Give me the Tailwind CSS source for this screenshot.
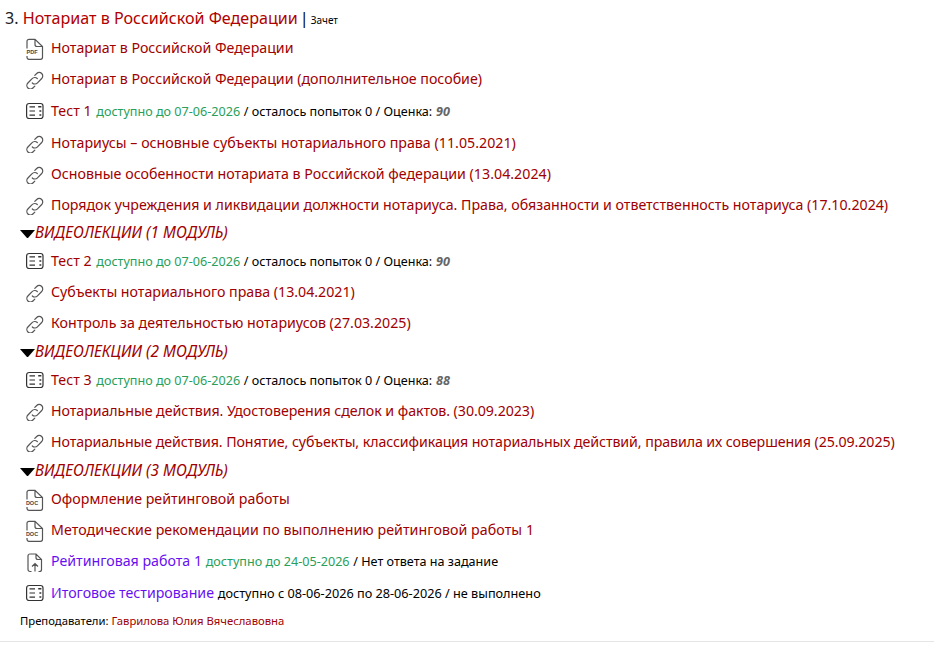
<!DOCTYPE html>
<html lang="ru">
<head>
  <meta charset="UTF-8" />
  <title>Нотариат в Российской Федерации</title>
  <script src="https://cdn.jsdelivr.net/npm/@tailwindcss/browser@4"></script>
</head>
<body class="bg-white font-['Noto_Sans',sans-serif] text-black overflow-hidden">
  <svg width="0" height="0" class="absolute">
    <defs>
      <symbol id="file" viewBox="0 0 20 24"><path d="M3 12.500V5.300a2 2 0 0 1 2-2h6L18.500 10.500V21.300a2 2 0 0 1-2 2H5a2 2 0 0 1-2-2V20M11 3.300V8.500a2 2 0 0 0 2 2h5.500" fill="none" stroke="#555" stroke-width="1.200"/></symbol>
      <symbol id="link" viewBox="0 0 20 20"><g transform="translate(0.800 1.500)" fill="none" stroke="#555" stroke-width="1.200" stroke-linecap="round"><path d="M7.500 12.500a3.600 3.600 0 0 0 5.200-.2l4.200-4.300a3.500 3.500 0 0 0-5-5L10 4.900"/><path d="M12.500 8a3.600 3.600 0 0 0-5.200.2l-4.200 4.300a3.500 3.500 0 0 0 5 5l1.900-1.900"/></g></symbol>
      <symbol id="quiz" viewBox="0 0 20 20"><g fill="none" stroke="#333" stroke-width="1.200"><rect x="2.600" y="2.500" width="16.400" height="15" rx="2.500"/><path d="M5.500 5.900h5.500M5.500 10h5.500M5.500 14.100h5.500" /></g><path d="M14.200 5.100h3.200v1.500h-3.200zM15.400 9.200h1.900v1.500h-1.900zM15.400 13.300h1.900v1.500h-1.900z" fill="#333"/></symbol>
      <symbol id="upload" viewBox="0 0 20 24"><g fill="none" stroke="#555" stroke-width="1.200"><path d="M7.500 22.500H6a2 2 0 0 1-2-2V7a2 2 0 0 1 2-2h6l5.500 5.500V20.500a2 2 0 0 1-2 2H14.500M12 5V8.500a2 2 0 0 0 2 2h3.500M11 22.500V14.500M8 17.500l3-3 3 3"/></g></symbol>
    </defs>
  </svg>

  <div class="pl-[5px] h-[642px] border-b border-[#e5e5e5]">
    <div class="h-[32px] pt-[5px] flex items-center text-[16.100px] leading-none whitespace-nowrap">
      <span class="text-[#222]">3.&nbsp;</span><span class="text-[#b00000]">Нотариат в Российской Федерации</span>
      <span class="ml-[2px] text-black">|</span><span class="ml-[2px] text-[10px] mt-[3px]">Зачет</span>
    </div>

    <div class="ml-[19px] text-[14.200px] whitespace-nowrap">
      <div class="h-[31px] flex items-center">
        <svg class="w-[20px] h-[24px] -my-[2px] mr-[7px] shrink-0"><use href="#file"/><text x="8" y="18.200" font-size="5.500" font-weight="700" fill="#444" text-anchor="middle" font-family="Liberation Sans">PDF</text></svg>
        <a class="text-[#a00000]">Нотариат в Российской Федерации</a>
      </div>
      <div class="h-[31px] flex items-center">
        <svg class="w-[20px] h-[20px] mr-[7px] shrink-0"><use href="#link"/></svg>
        <a class="text-[#a00000]">Нотариат в Российской Федерации (дополнительное пособие)</a>
      </div>
      <div class="h-[33px] pt-[1px] flex items-center">
        <svg class="w-[20px] h-[20px] mr-[7px] shrink-0"><use href="#quiz"/></svg>
        <div>
          <a class="text-[#a00000]">Тест 1</a>
          <span class="ml-[1px] text-[12.600px] text-[#28a05a]">доступно до 07-06-2026</span>
          <span class="text-[12.600px]">/ осталось попыток 0 / Оценка:</span>
          <b class="text-[12.600px] italic text-[#666]">90</b>
        </div>
      </div>
      <div class="h-[31px] flex items-center">
        <svg class="w-[20px] h-[20px] mr-[7px] shrink-0"><use href="#link"/></svg>
        <a class="text-[#a00000] tracking-[0.030px]">Нотариусы – основные субъекты нотариального права (11.05.2021)</a>
      </div>
      <div class="h-[31px] flex items-center">
        <svg class="w-[20px] h-[20px] mr-[7px] shrink-0"><use href="#link"/></svg>
        <a class="text-[#a00000] tracking-[0.030px]">Основные особенности нотариата в Российской федерации (13.04.2024)</a>
      </div>
      <div class="h-[31px] flex items-center">
        <svg class="w-[20px] h-[20px] mr-[7px] shrink-0"><use href="#link"/></svg>
        <a class="text-[#a00000]">Порядок учреждения и ликвидации должности нотариуса. Права, обязанности и ответственность нотариуса (17.10.2024)</a>
      </div>

      <div class="-ml-[4px] h-[25px] flex items-center italic text-[15.400px] text-[#a00000]">
        <span class="w-[15px] h-0 mt-[2px] border-x-[7.500px] border-x-transparent border-t-[8px] border-t-black"></span>ВИДЕОЛЕКЦИИ (1 МОДУЛЬ)
      </div>
      <div class="h-[31px] flex items-center">
        <svg class="w-[20px] h-[20px] mr-[7px] shrink-0"><use href="#quiz"/></svg>
        <div>
          <a class="text-[#a00000]">Тест 2</a>
          <span class="ml-[1px] text-[12.600px] text-[#28a05a]">доступно до 07-06-2026</span>
          <span class="text-[12.600px]">/ осталось попыток 0 / Оценка:</span>
          <b class="text-[12.600px] italic text-[#666]">90</b>
        </div>
      </div>
      <div class="h-[31px] flex items-center">
        <svg class="w-[20px] h-[20px] mr-[7px] shrink-0"><use href="#link"/></svg>
        <a class="text-[#a00000]">Субъекты нотариального права (13.04.2021)</a>
      </div>
      <div class="h-[31px] flex items-center">
        <svg class="w-[20px] h-[20px] mr-[7px] shrink-0"><use href="#link"/></svg>
        <a class="text-[#a00000]">Контроль за деятельностью нотариусов (27.03.2025)</a>
      </div>

      <div class="-ml-[4px] h-[26px] pt-[2px] flex items-center italic text-[15.400px] text-[#a00000]">
        <span class="w-[15px] h-0 mt-[2px] border-x-[7.500px] border-x-transparent border-t-[8px] border-t-black"></span>ВИДЕОЛЕКЦИИ (2 МОДУЛЬ)
      </div>
      <div class="h-[31px] flex items-center">
        <svg class="w-[20px] h-[20px] mr-[7px] shrink-0"><use href="#quiz"/></svg>
        <div>
          <a class="text-[#a00000]">Тест 3</a>
          <span class="ml-[1px] text-[12.600px] text-[#28a05a]">доступно до 07-06-2026</span>
          <span class="text-[12.600px]">/ осталось попыток 0 / Оценка:</span>
          <b class="text-[12.600px] italic text-[#666]">88</b>
        </div>
      </div>
      <div class="h-[31px] flex items-center">
        <svg class="w-[20px] h-[20px] mr-[7px] shrink-0"><use href="#link"/></svg>
        <a class="text-[#a00000] tracking-[-0.045px]">Нотариальные действия. Удостоверения сделок и фактов. (30.09.2023)</a>
      </div>
      <div class="h-[31px] flex items-center">
        <svg class="w-[20px] h-[20px] mr-[7px] shrink-0"><use href="#link"/></svg>
        <a class="text-[#a00000] tracking-[-0.080px]">Нотариальные действия. Понятие, субъекты, классификация нотариальных действий, правила их совершения (25.09.2025)</a>
      </div>

      <div class="-ml-[4px] h-[26px] pt-[2px] flex items-center italic text-[15.400px] text-[#a00000]">
        <span class="w-[15px] h-0 mt-[2px] border-x-[7.500px] border-x-transparent border-t-[8px] border-t-black"></span>ВИДЕОЛЕКЦИИ (3 МОДУЛЬ)
      </div>
      <div class="h-[31px] flex items-center">
        <svg class="w-[20px] h-[24px] -my-[2px] mr-[7px] shrink-0"><use href="#file"/><text x="8" y="18.200" font-size="5.500" font-weight="700" fill="#444" text-anchor="middle" font-family="Liberation Sans">DOC</text></svg>
        <a class="text-[#a00000] tracking-[0.030px]">Оформление рейтинговой работы</a>
      </div>
      <div class="h-[31px] flex items-center">
        <svg class="w-[20px] h-[24px] -my-[2px] mr-[7px] shrink-0"><use href="#file"/><text x="8" y="18.200" font-size="5.500" font-weight="700" fill="#444" text-anchor="middle" font-family="Liberation Sans">DOC</text></svg>
        <a class="text-[#a00000] tracking-[0.070px]">Методические рекомендации по выполнению рейтинговой работы 1</a>
      </div>
      <div class="h-[32px] flex items-center">
        <svg class="w-[20px] h-[24px] -my-[2px] mr-[7px] shrink-0"><use href="#upload"/></svg>
        <div>
          <a class="text-[#6610f2]">Рейтинговая работа 1</a>
          <span class="text-[12.600px] text-[#28a05a]">доступно до 24-05-2026</span>
          <span class="text-[12.600px]">/ Нет ответа на задание</span>
        </div>
      </div>
      <div class="h-[31px] flex items-center">
        <svg class="w-[20px] h-[20px] mr-[7px] shrink-0"><use href="#quiz"/></svg>
        <div>
          <a class="text-[#6610f2]">Итоговое тестирование</a>
          <span class="text-[12.700px]">доступно с 08-06-2026 по 28-06-2026 / не выполнено</span>
        </div>
      </div>
    </div>

    <div class="ml-[15px] mt-[5px] text-[11.300px] whitespace-nowrap">Преподаватели: <span class="text-[#a00000]">Гаврилова Юлия Вячеславовна</span></div>
  </div>
</body>
</html>
